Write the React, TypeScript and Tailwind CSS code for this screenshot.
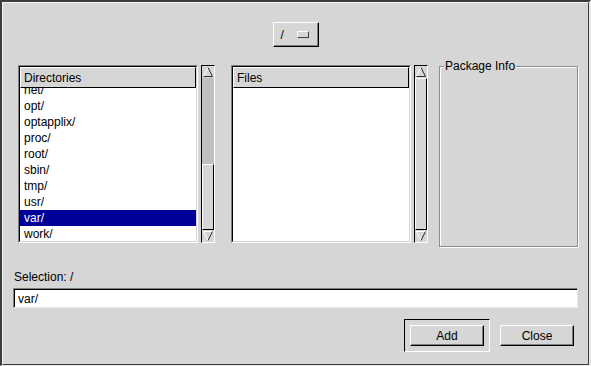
import React from 'react';

const font = { fontFamily: '"Liberation Sans", Arial, Helvetica, sans-serif' };

const dirs = ['net/', 'opt/', 'optapplix/', 'proc/', 'root/', 'sbin/', 'tmp/', 'usr/', 'var/', 'work/'];

const Arrow = ({ up }: { up: boolean }) => (
  <svg width="12" height="12" viewBox="0 0 12 12" className="block">
    {up ? (
      <>
        <line x1="6" y1="1.5" x2="1.5" y2="10.5" stroke="#ffffff" strokeWidth="1" />
        <line x1="6" y1="1.5" x2="10.5" y2="10.5" stroke="#303030" strokeWidth="1" />
        <line x1="1.5" y1="10.5" x2="10.5" y2="10.5" stroke="#303030" strokeWidth="1" />
      </>
    ) : (
      <>
        <line x1="1.5" y1="1.5" x2="10.5" y2="1.5" stroke="#ffffff" strokeWidth="1" />
        <line x1="1.5" y1="1.5" x2="6" y2="10.5" stroke="#ffffff" strokeWidth="1" />
        <line x1="10.5" y1="1.5" x2="6" y2="10.5" stroke="#303030" strokeWidth="1" />
      </>
    )}
  </svg>
);

const ScrollBar = ({ offset, size }: { offset: number; size: number | null }) => (
  <div className="w-[14px] h-[178px] flex flex-col border border-t-black border-l-black border-r-white border-b-white bg-[#d6d6d6]">
    <div className="h-[12px] shrink-0">
      <Arrow up />
    </div>
    <div className="flex-1 flex flex-col bg-[#c0c0c0]">
      {size === null ? (
        <div className="flex-1 bg-[#d6d6d6] border border-t-white border-l-white border-r-black border-b-black" />
      ) : (
        <>
          <div style={{ height: offset }} />
          <div
            className="bg-[#d6d6d6] border border-t-white border-l-white border-r-black border-b-black"
            style={{ height: size }}
          />
        </>
      )}
    </div>
    <div className="h-[12px] shrink-0">
      <Arrow up={false} />
    </div>
  </div>
);

const ListBox = ({ title, items, selected }: { title: string; items: string[]; selected?: string }) => (
  <div className="w-[180px] h-[178px] border border-t-[#808080] border-l-[#808080] border-r-white border-b-white">
    <div className="h-full flex flex-col bg-white border border-t-black border-l-black border-r-[#d6d6d6] border-b-[#d6d6d6]">
      <div className="h-[21px] shrink-0 flex items-center px-[3px] bg-[#d6d6d6] border border-t-white border-l-white border-r-black border-b-black text-[12px]">
        {title}
      </div>
      <div className="flex-1 overflow-hidden">
        <div className="-mt-[6px]">
          {items.map((d) => (
            <div
              key={d}
              className={
                d === selected
                  ? 'h-[16px] leading-[16px] pl-[4px] text-[12px] bg-[#000099] text-white'
                  : 'h-[16px] leading-[16px] pl-[4px] text-[12px] text-black'
              }
            >
              {d}
            </div>
          ))}
        </div>
      </div>
    </div>
  </div>
);

const Button = ({ label }: { label: string }) => (
  <div className="w-[74px] h-[21px] flex items-center justify-center bg-[#d6d6d6] border border-t-white border-l-white border-r-black border-b-black shadow-[inset_-1px_-1px_0_#808080] text-[12px]">
    {label}
  </div>
);

export default function App() {
  return (
    <div className="w-[591px] h-[366px] bg-[#d6d6d6] text-black" style={font}>
      <div className="h-full border-t-2 border-l-2 border-t-[#3c3c3c] border-l-[#3c3c3c] border-r-2 border-b border-r-[#e8e8e8] border-b-[#e8e8e8]">
        <div className="h-full flex flex-col border border-t-[#f4f4f4] border-l-[#f4f4f4] border-r-[#3c3c3c] border-b-[#3c3c3c]">
          {/* option menu */}
          <div className="pt-[19px] flex justify-center">
            <div className="w-[46px] h-[25px] flex items-center bg-[#d6d6d6] border border-t-white border-l-white border-r-black border-b-black shadow-[inset_-1px_-1px_0_#808080] text-[12px]">
              <span className="ml-[7px]">/</span>
              <span className="ml-[13px] w-[12px] h-[7px] border border-t-white border-l-white border-r-[#404040] border-b-[#404040]" />
            </div>
          </div>

          {/* lists */}
          <div className="mt-[18px] h-[182px] flex items-start pl-[15px]">
            <ListBox title="Directories" items={dirs} selected="var/" />
            <div className="ml-[3px]">
              <ScrollBar offset={86} size={66} />
            </div>
            <div className="ml-[16px]">
              <ListBox title="Files" items={[]} />
            </div>
            <div className="ml-[3px]">
              <ScrollBar offset={0} size={null} />
            </div>
            <div className="ml-[11px] mt-[1px] relative w-[139px] h-[181px] border border-[#8c8c8c] shadow-[inset_1px_1px_0_#ffffff,1px_1px_0_#ffffff]">
              <span className="absolute left-[4px] -top-[8px] px-[1px] bg-[#d6d6d6] text-[12px] leading-[14px]">
                Package Info
              </span>
            </div>
          </div>

          {/* selection */}
          <div className="px-[10px]">
            <div className="mt-[23px] text-[12px] leading-[14px] pl-[1px]">Selection: /</div>
            <div className="mt-[4px] h-[20px] border border-t-[#808080] border-l-[#808080] border-r-[#e8e8e8] border-b-[#e8e8e8]">
              <div className="h-full flex items-center bg-white border-t border-l border-black pl-[3px] text-[12px]">
                var/
              </div>
            </div>
          </div>

          {/* buttons */}
          <div className="mt-[11px] flex items-center justify-end gap-[10px] pr-[14px]">
            <div className="p-[5px] border border-t-black border-l-black border-r-white border-b-white">
              <Button label="Add" />
            </div>
            <Button label="Close" />
          </div>
        </div>
      </div>
    </div>
  );
}
